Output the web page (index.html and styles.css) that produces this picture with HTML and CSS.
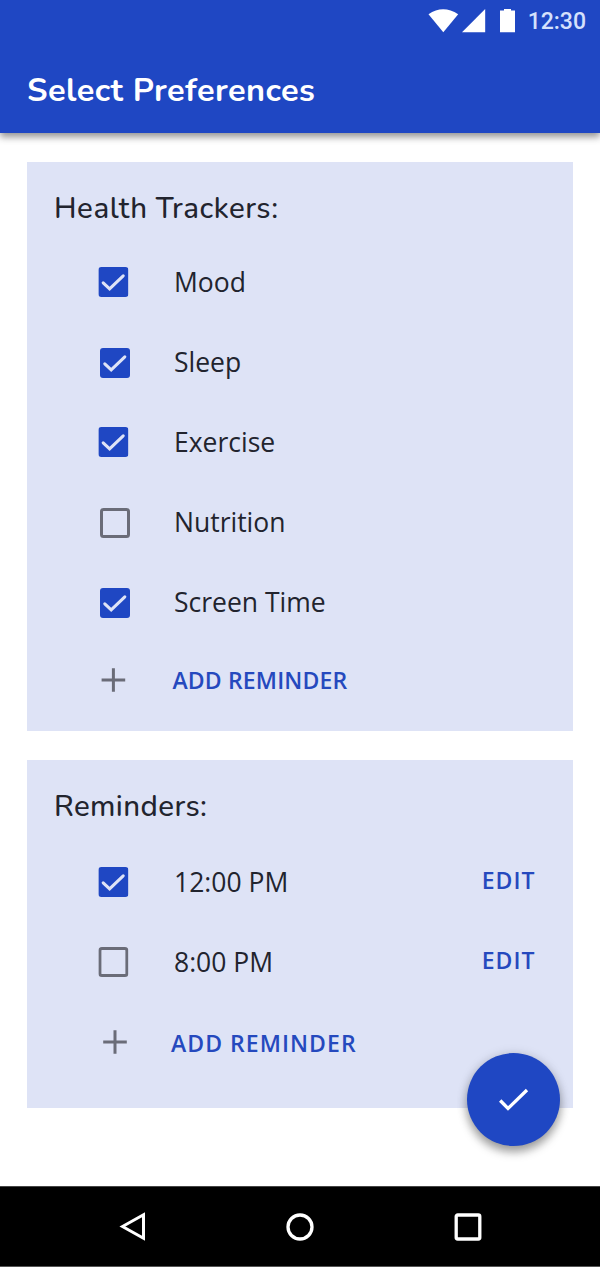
FILE: index.html
```html
<!DOCTYPE html>
<html lang="en">
<head>
<meta charset="utf-8">
<title>Select Preferences</title>
<link rel="stylesheet" href="styles.css">
</head>
<body>
<svg class="symbols" aria-hidden="true">
  <symbol id="checked" viewBox="0 0 30 30"><rect width="30" height="30" rx="3" fill="#1f47c3"/><path d="M4.8 15.8l6.4 6L24.8 8.8" fill="none" stroke="#dee3f6" stroke-width="3.1" stroke-linecap="round"/></symbol>
  <symbol id="unchecked" viewBox="0 0 30 30"><rect x="1.5" y="1.5" width="27" height="27" rx="2" fill="none" stroke="#6a6c78" stroke-width="3"/></symbol>
  <symbol id="plus" viewBox="0 0 30 30"><path d="M15 3.2v23.6M3.2 15h23.6" fill="none" stroke="#6a6c78" stroke-width="3"/></symbol>
</svg>
<div class="screen">
  <header class="app-bar">
    <div class="status">
      <svg class="status-icons" viewBox="0 0 90 26" fill="#fff"><path d="M0.5 6.2Q15 -3.5 30.2 6.2L15.3 24.3Z"/><path d="M34 24.2L57.2 1v23.2Z"/><path d="M72 2.5h4V1h7v1.500h4V24.200H72Z"/></svg>
      <span class="clock">12:30</span>
    </div>
    <h1 class="title">Select Preferences</h1>
  </header>
  <main class="content">
    <section class="card trackers">
      <h2 class="heading">Health Trackers:</h2>
      <ul class="list">
        <li class="row"><svg class="box"><use href="#checked"/></svg><span class="label">Mood</span></li>
        <li class="row"><svg class="box shifted"><use href="#checked"/></svg><span class="label">Sleep</span></li>
        <li class="row"><svg class="box"><use href="#checked"/></svg><span class="label">Exercise</span></li>
        <li class="row"><svg class="box shifted"><use href="#unchecked"/></svg><span class="label">Nutrition</span></li>
        <li class="row"><svg class="box shifted"><use href="#checked"/></svg><span class="label">Screen Time</span></li>
        <li class="row add"><svg class="box"><use href="#plus"/></svg><span class="action">ADD REMINDER</span></li>
      </ul>
    </section>
    <section class="card reminders">
      <h2 class="heading">Reminders:</h2>
      <ul class="list">
        <li class="row"><svg class="box"><use href="#checked"/></svg><span class="label">12:00 PM</span><span class="edit">EDIT</span></li>
        <li class="row"><svg class="box"><use href="#unchecked"/></svg><span class="label">8:00 PM</span><span class="edit">EDIT</span></li>
        <li class="row add-wide"><svg class="box plus-right"><use href="#plus"/></svg><span class="action">ADD REMINDER</span></li>
      </ul>
    </section>
  </main>
  <button class="fab" aria-label="Save"><svg viewBox="0 0 30 24"><path d="M1.2 12.500L9 20.500L28 2" fill="none" stroke="#fff" stroke-width="3.3"/></svg></button>
  <nav class="nav">
    <svg class="nav-icon" viewBox="0 0 30 30"><path d="M4.500 14.500L25.500 2.700v23.600Z" fill="none" stroke="#fff" stroke-width="3"/></svg>
    <svg class="nav-icon" viewBox="0 0 30 30"><circle cx="15" cy="15" r="12" fill="none" stroke="#fff" stroke-width="3.3"/></svg>
    <svg class="nav-icon" viewBox="0 0 30 30"><rect x="3.200" y="3" width="23.600" height="24" rx="1.500" fill="none" stroke="#fff" stroke-width="3.300"/></svg>
  </nav>
</div>
</body>
</html>
```
FILE: styles.css
```css
* { box-sizing: border-box; }
body { margin: 0; background: #fff; color: #22242e; font-family: "Open Sans", sans-serif; }
.symbols { display: none; }
.screen { position: relative; display: flex; flex-direction: column; height: 1267px; overflow: hidden; }
.app-bar { height: 133px; background: #1f47c3; color: #fff; box-shadow: 0 4px 7px rgba(0, 0, 0, .42); }
.status { display: flex; justify-content: flex-end; align-items: center; height: 41px; padding-right: 14px; }
.status-icons { width: 90px; height: 26px; margin-right: 9.500px; }
.clock { margin-top: 2px; font: 500 23px/30px Roboto, sans-serif; color: #d5e1fc; }
.title { margin: 27px 0 0 27px; font: 700 32.500px/44px Nunito, Lato, sans-serif; letter-spacing: .45px; white-space: nowrap; }
.content { flex: 1; display: flex; flex-direction: column; gap: 29px; padding: 29px 27px 0; }
.card { background: #dee3f6; padding: 26px 0 0 27px; }
.trackers { height: 569px; }
.reminders { height: 348px; }
.heading { margin: 0; height: 54px; font: 550 29.500px/41px Nunito, Lato, sans-serif; letter-spacing: .55px; white-space: nowrap; }
.reminders .heading { height: 55.500px; letter-spacing: .4px; }
.list { margin: 0; padding: 0; list-style: none; }
.row { display: flex; align-items: center; height: 80px; padding-left: 44px; }
.box { width: 30px; height: 30px; flex: none; margin-right: 46px; transform: translateX(.4px); }
.shifted { margin-left: 1.500px; margin-right: 44.500px; transform: translateY(1px); }
.label { font-size: 26.500px; line-height: 40px; white-space: nowrap; }
.action, .edit { font-size: 23px; font-weight: 600; line-height: 36px; color: #2549be; white-space: nowrap; }
.action { margin-left: -1.500px; letter-spacing: .15px; }
.add { height: 76px; }
.add .action { padding-bottom: 1px; }
.plus-right { margin-left: 2px; margin-right: 42.500px; transform: none; }
.add-wide .action { padding-top: 2px; letter-spacing: 1.050px; }
.edit { margin-left: auto; margin-right: 37.500px; padding-bottom: 3px; letter-spacing: 1px; }
.fab { position: absolute; right: 40px; bottom: 121px; display: flex; align-items: center; justify-content: center; width: 93px; height: 93px; padding: 0; border: 0; border-radius: 50%; background: #1f47c3; box-shadow: 0 6px 10px rgba(0, 0, 0, .34), 0 1px 12px rgba(0, 0, 0, .14); }
.fab svg { width: 30px; height: 24px; }
.nav { display: flex; justify-content: space-between; align-items: center; height: 81px; padding: 0 117px 0 118px; background: #000; border-top: 1px solid #454545; border-bottom: 1px solid #555; }
.nav-icon { width: 30px; height: 30px; }
.nav-icon:nth-child(2) { margin-right: 2px; }
```
